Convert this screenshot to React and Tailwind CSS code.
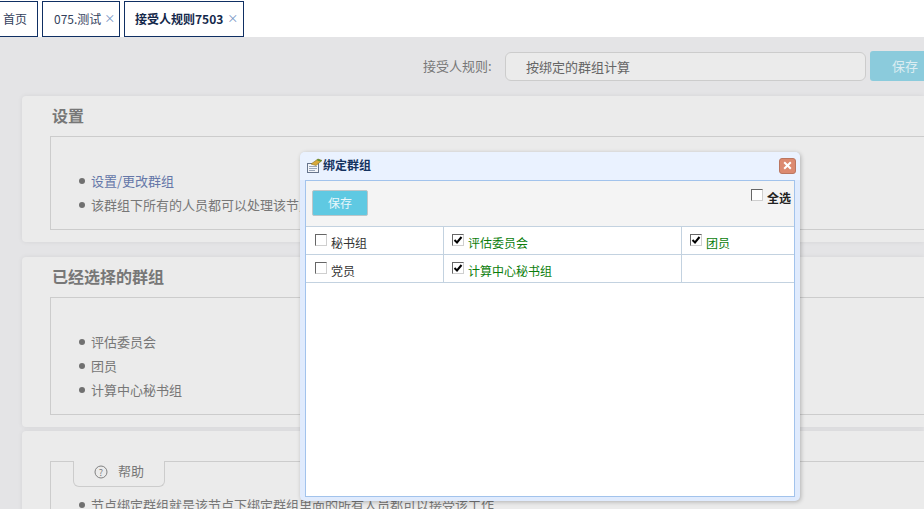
import React from "react";

const font = { fontFamily: '"Noto Sans CJK SC", "Noto Sans", sans-serif' };

function Tab({ label, bold, close, cls, closeCls = "ml-[4px]" }) {
  return (
    <div className={`h-[36px] mt-px bg-white border border-[#0f2f63] flex items-center pb-[1px] text-[12px] ${cls} ${bold ? "font-bold text-[#14284b]" : "text-[#33415c]"}`}>
      <span>{label}</span>
      {close && <span className={`${closeCls} text-[#6f8fc0] text-[11px] font-normal leading-none`}>×</span>}
    </div>
  );
}

function Bullet({ children, cls = "text-[#777777]" }) {
  return (
    <li className={`flex items-center h-[24px] text-[13px] ${cls}`}>
      <span className="w-[6px] h-[6px] rounded-full bg-[#707070] ml-[28px] mr-[6px] shrink-0" />
      <span className="whitespace-nowrap">{children}</span>
    </li>
  );
}

function Check({ checked, cls = "" }) {
  return (
    <span className={`inline-flex w-[12px] h-[12px] shrink-0 bg-white border border-t-[#666666] border-l-[#666666] border-r-[#cfcfcf] border-b-[#cfcfcf] items-center justify-center ${cls}`}>
      {checked && (
        <svg width="10" height="10" viewBox="0 0 10 10">
          <path d="M1.5 5 L4 7.5 L8.5 2" stroke="#000" strokeWidth="2" fill="none" />
        </svg>
      )}
    </span>
  );
}

function Cell({ w, label, checked, last, pad = "pl-[8px]" }) {
  return (
    <div className={`h-full ${w} ${pad} ${last ? "" : "border-r border-[#c3d2e0]"} flex items-start pt-[7px]`}>
      {label && (
        <>
          <Check checked={checked} />
          <span className={`ml-[4px] mt-[1px] text-[12px] leading-[16px] whitespace-nowrap ${checked ? "text-[#0a7d0a]" : "text-[#333333]"}`}>{label}</span>
        </>
      )}
    </div>
  );
}

export default function App() {
  return (
    <div style={font} className="relative w-[924px] h-[509px] overflow-hidden bg-white">
      <div className="h-[37px] flex items-start bg-white">
        <Tab label="首页" cls="w-[39px] ml-[-1px] pl-[3px]" />
        <Tab label="075.测试" close closeCls="ml-[3px]" cls="w-[78px] ml-[4px] pl-[11px]" />
        <Tab label="接受人规则7503" bold close cls="w-[120px] ml-[4px] pl-[10px]" />
      </div>

      <div className="h-[472px] bg-[#e4e4e6] pl-[22px] overflow-hidden">
        <div className="h-[59px] flex items-start pt-[15px] ml-[401px] w-[600px]">
          <span className="mt-[5px] w-[82px] text-[13px] leading-[18px] text-[#777777] whitespace-nowrap">接受人规则:</span>
          <div className="w-[361px] h-[29px] rounded-[6px] border border-[#cccccc] bg-[#ebebeb] pl-[20px] flex items-center text-[13px] text-[#666666]">按绑定的群组计算</div>
          <div className="ml-[4px] mt-[-1px] w-[70px] h-[30px] rounded-[3px] bg-[#8bcbdc] flex items-center pl-[22px] text-[13px] text-[#dcedf2]">保存</div>
        </div>

        <section className="h-[146px] bg-[#ebebeb] rounded-l-[4px] pl-[28px] shadow-[0_0_5px_rgba(0,0,0,0.07)]">
          <h2 className="h-[40px] pl-[2px] pt-[8px] text-[16px] leading-[22px] font-bold text-[#777777]">设置</h2>
          <div className="h-[94px] border border-r-0 border-[#cccccc] pt-[32px]">
            <ul>
              <Bullet cls="text-[#6577a8]">设置/更改群组</Bullet>
              <Bullet>该群组下所有的人员都可以处理该节点</Bullet>
            </ul>
          </div>
        </section>

        <section className="h-[170px] mt-[15px] bg-[#ebebeb] rounded-l-[4px] pl-[28px] shadow-[0_0_5px_rgba(0,0,0,0.07)]">
          <h2 className="h-[40px] pl-[2px] pt-[8px] text-[16px] leading-[22px] font-bold text-[#777777]">已经选择的群组</h2>
          <div className="h-[118px] border border-r-0 border-[#cccccc] pt-[32px]">
            <ul>
              <Bullet>评估委员会</Bullet>
              <Bullet>团员</Bullet>
              <Bullet>计算中心秘书组</Bullet>
            </ul>
          </div>
        </section>

        <section className="h-[100px] mt-[4px] bg-[#ebebeb] rounded-l-[4px] pl-[28px] pt-[30px] shadow-[0_0_5px_rgba(0,0,0,0.07)]">
          <div className="h-[80px] border-l border-t border-[#cccccc]">
            <div className="ml-[22px] mt-[-1px] w-[92px] h-[26px] border border-t-0 border-[#cccccc] rounded-b-[6px] bg-[#ebebeb] flex items-start pl-[20px] pt-[1px] text-[13px] leading-[18px] text-[#777777]">
              <svg width="14" height="14" viewBox="0 0 14 14" className="mr-[10px] mt-[3px]">
                <circle cx="7" cy="7" r="6" fill="none" stroke="#808080" strokeWidth="1" />
                <text x="7" y="10.5" textAnchor="middle" fontSize="9" fill="#808080">?</text>
              </svg>
              <span>帮助</span>
            </div>
            <ul className="mt-[6px]">
              <Bullet>节点绑定群组就是该节点下绑定群组里面的所有人员都可以接受该工作</Bullet>
            </ul>
          </div>
        </section>
      </div>

      <div className="absolute left-[300px] top-[152px] w-[500px] h-[349px] rounded-[5px] bg-[#e0ebfd] shadow-[1px_1px_4px_rgba(0,0,0,0.25)] px-[5px] pb-[4px] flex flex-col">
        <div className="h-[28px] shrink-0 flex items-center rounded-t-[5px] bg-[#eaf2ff] mx-[-5px] px-[5px]">
          <svg width="17" height="16" viewBox="0 0 17 16" className="ml-[1px]">
            <rect x="1.5" y="5.5" width="11" height="9" fill="#f4f6fa" stroke="#67758c" />
            <path d="M3 8.5h8M3 10.5h8M3 12.5h6" stroke="#9aa7ba" />
            <path d="M5 6 L12 1 L16 2.5 L10 7.5 Z" fill="#d9a93a" stroke="#8b7326" strokeWidth="0.6" />
            <path d="M12 1 L16 2.5 L14.5 3.8 L10.5 2 Z" fill="#5d8f2f" />
          </svg>
          <span className="text-[12px] leading-[16px] font-bold text-[#14325f] mb-[2px]">绑定群组</span>
          <span className="ml-auto mr-[-1px] mb-[1px] w-[17px] h-[16px] rounded-[3px] bg-[#dc8a70] border border-[#bb7660] flex items-center justify-center">
            <svg width="9" height="9" viewBox="0 0 9 9">
              <path d="M1.2 1.2 L7.8 7.8 M7.8 1.2 L1.2 7.8" stroke="#fff" strokeWidth="2" />
            </svg>
          </span>
        </div>

        <div className="flex-1 bg-white border border-[#a2c3ec] flex flex-col">
          <div className="relative h-[46px] shrink-0 bg-[#f4f4f4] border-b border-[#c3d2e0] pl-[6px] pt-[9px]">
            <div className="w-[56px] h-[26px] rounded-[2px] bg-[#5fc9e2] border border-[#bcc6c9] flex items-center justify-center text-[12px] text-[#e9f7fb]">保存</div>
            <div className="absolute right-[3px] top-[8px] flex items-start">
              <Check cls="mr-[4px]" />
              <span className="mt-[1px] text-[12px] leading-[16px] font-bold text-[#222222]">全选</span>
            </div>
          </div>
          <div className="h-[28px] shrink-0 flex border-b border-[#c3d2e0]">
            <Cell w="w-[138px]" pad="pl-[9px]" label="秘书组" />
            <Cell w="w-[238px]" label="评估委员会" checked />
            <Cell w="w-[112px]" label="团员" checked last />
          </div>
          <div className="h-[28px] shrink-0 flex border-b border-[#c3d2e0]">
            <Cell w="w-[138px]" pad="pl-[9px]" label="党员" />
            <Cell w="w-[238px]" label="计算中心秘书组" checked />
            <Cell w="w-[112px]" last />
          </div>
        </div>
      </div>
    </div>
  );
}
